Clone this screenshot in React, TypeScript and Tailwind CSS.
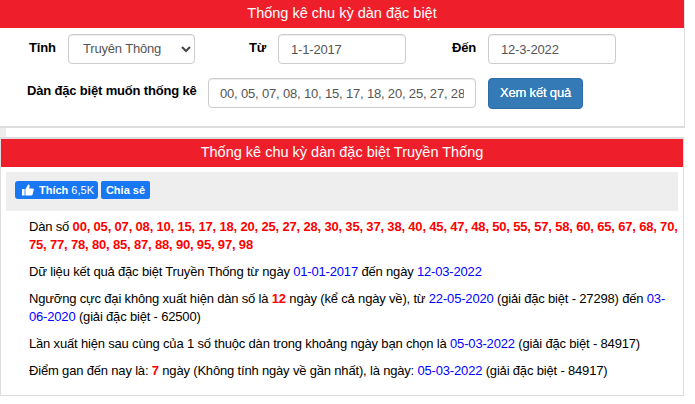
const numbers = "00, 05, 07, 08, 10, 15, 17, 18, 20, 25, 27, 28, 30, 35, 37, 38, 40, 45, 47, 48, 50, 55, 57, 58, 60, 65, 67, 68, 70, 75, 77, 78, 80, 85, 87, 88, 90, 95, 97, 98";

const inputCls = "h-[30px] rounded border border-[#ccc] bg-white text-[13px] tracking-[-0.175px] text-[#555] shadow-[inset_0_1px_1px_rgba(0,0,0,0.075)] outline-none";

function Dt({ children }: { children: React.ReactNode }) {
  return <span className="text-[#0000ff]">{children}</span>;
}

function Hot({ children }: { children: React.ReactNode }) {
  return <strong className="text-[#ff0000]">{children}</strong>;
}

export default function App() {
  return (
    <div className="w-[695px] h-[404px] overflow-hidden bg-white text-[13px] tracking-[-0.175px] leading-[18px] text-black font-['Liberation_Sans',Arial,sans-serif]">
      <section className="w-[685px] h-[128px] border-r border-b-2 border-[#ddd]">
        <h2 className="h-[28px] bg-[#ee1f2b] text-center text-[14.5px] tracking-normal leading-[27px] font-normal text-white">Thống kê chu kỳ dàn đặc biệt</h2>
        <div className="flex items-center h-[30px] mt-[6px]">
          <label className="w-[39px] ml-[29px] font-bold -mt-[3px]">Tỉnh</label>
          <div className="relative w-[127px]">
            <select className={inputCls + " w-full appearance-none pl-[14px] pr-4"} defaultValue="Truyên Thông">
              <option>Truyên Thông</option>
            </select>
            <svg className="absolute right-[4px] top-[12px] w-[10px] h-[7px] pointer-events-none" viewBox="0 0 10 7" fill="none" stroke="#444" strokeWidth="2"><path d="M1 1l4 4 4-4" /></svg>
          </div>
          <label className="w-[29px] ml-[54px] font-bold -mt-[3px]">Từ</label>
          <input readOnly value="1-1-2017" className={inputCls + " w-[128px] px-3"} />
          <label className="w-[36px] ml-[46px] font-bold -mt-[3px]">Đến</label>
          <input readOnly value="12-3-2022" className={inputCls + " w-[128px] px-3"} />
        </div>
        <div className="flex items-start mt-[14px]">
          <label className="w-[181px] ml-[27px] font-bold leading-[26px] whitespace-nowrap">Dàn đặc biệt muốn thống kê</label>
          <input readOnly value={numbers} className={inputCls + " w-[268px] px-[11px]"} />
          <button className="w-[95px] h-[31px] ml-[12px] rounded bg-[#337ab7] text-[13px] leading-[25px] pb-[3px] text-white border border-[#2e6da4] [text-shadow:0_0_0.6px_#fff]">Xem kết quả</button>
        </div>
      </section>
      <div className="w-[6px] h-[9px] bg-[#eee]" />
      <section className="w-[684px] h-[259px] border border-t-2 border-[#ddd]">
        <h2 className="h-[28px] bg-[#ee1f2b] text-center text-[14.5px] tracking-normal leading-[26px] font-normal text-white">Thống kê chu kỳ dàn đặc biệt Truyền Thống</h2>
        <div className="mt-[5px] ml-[5px] w-[672px] h-[39px] bg-[#eee] pl-[9px] pt-[9px] flex gap-[3px]">
          <div className="w-[83px] h-[18px] rounded-[3px] bg-[#1877f2] text-white text-[11px] tracking-normal leading-[18px] font-bold flex items-center pl-[7px]">
            <svg className="w-[12px] h-[12px] mr-[5px]" viewBox="0 0 12 12" fill="#fff"><path d="M0 5h2.6v6.5H0zM3.4 5.2 5.6 1.6c.2-.6.4-1.2 1-1.2.8 0 1.1.8 1 1.6L7.2 4.4h3.5c.8 0 1.3.7 1.1 1.4l-1.2 4.7c-.2.6-.6 1-1.2 1H3.4z" /></svg>
            Thích <span className="font-normal ml-[3px]">6,5K</span>
          </div>
          <div className="w-[49px] h-[18px] rounded-[2px] bg-[#1877f2] text-white text-[11px] tracking-normal leading-[18px] font-bold text-center">Chia sẻ</div>
        </div>
        <div className="pl-[28px] pr-[3px] pt-[7px]">
          <p className="mb-[9px]">Dàn số <Hot>{numbers}</Hot></p>
          <p className="mb-[9px]">Dữ liệu kết quả đặc biệt Truyền Thống từ ngày <Dt>01-01-2017</Dt> đến ngày <Dt>12-03-2022</Dt></p>
          <p className="mb-[9px]">Ngưỡng cực đại không xuất hiện dàn số là <Hot>12</Hot> ngày (kể cả ngày về), từ <Dt>22-05-2020</Dt> (giải đặc biệt - 27298) đến <Dt>03-<wbr />06-2020</Dt> (giải đặc biệt - 62500)</p>
          <p className="mb-[9px]">Lần xuất hiện sau cùng của 1 số thuộc dàn trong khoảng ngày bạn chọn là <Dt>05-03-2022</Dt> (giải đặc biệt - 84917)</p>
          <p>Điểm gan đến nay là: <Hot>7</Hot> ngày (Không tính ngày về gần nhất), là ngày: <Dt>05-03-2022</Dt> (giải đặc biệt - 84917)</p>
        </div>
      </section>
    </div>
  );
}
